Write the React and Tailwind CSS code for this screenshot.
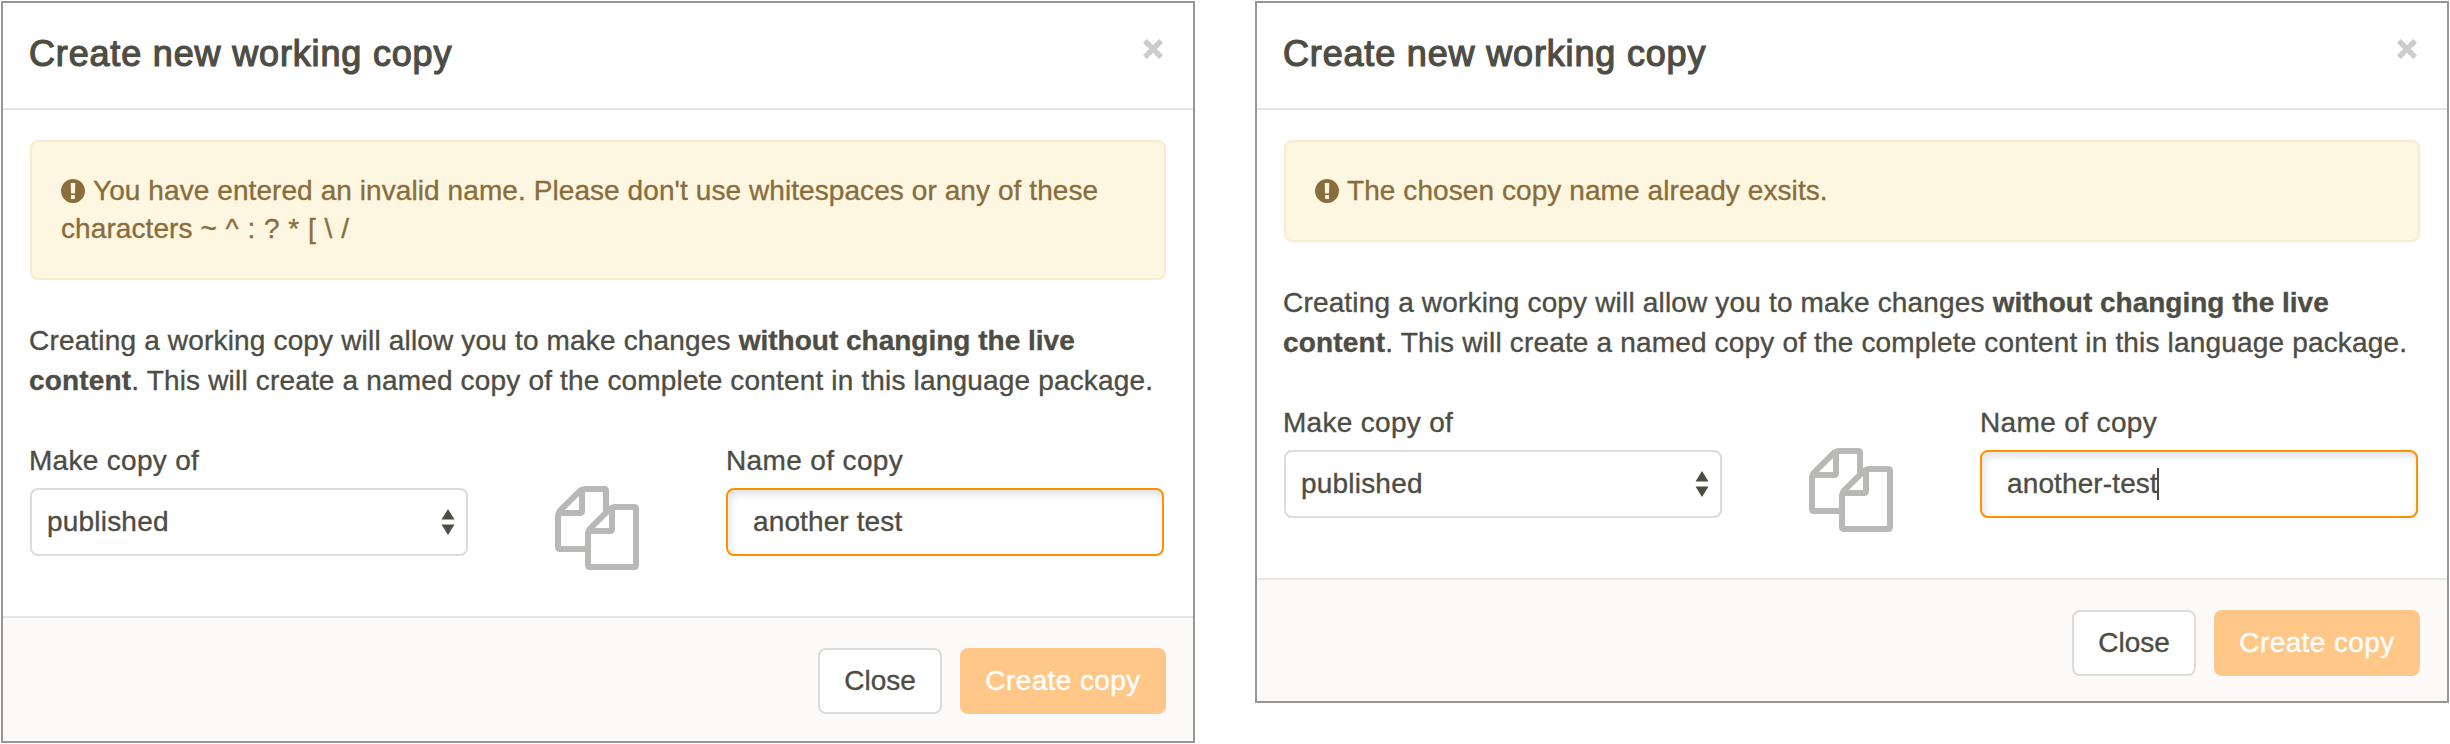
function CloseIcon() {
  return (
    <svg className="h-5 w-5" viewBox="0 0 20 20" fill="none" stroke="#cccccc" strokeWidth="5.4">
      <path d="M1.9 1.9 18.1 18.1M18.1 1.9 1.9 18.1" />
    </svg>
  );
}

function ExclamationCircle() {
  return (
    <svg className="mr-[8px] -mt-[3px] inline-block h-6 w-6 align-middle" viewBox="128 128 1536 1536" fill="currentColor">
      <path d="M896 128q209 0 385.5 103t279.5 279.5 103 385.5-103 385.5-279.5 279.5-385.5 103-385.5-103-279.5-279.5-103-385.5 103-385.5 279.5-279.5 385.5-103zm128 1247v-190q0-14-9-23.5t-22-9.5h-192q-13 0-23 10t-10 23v190q0 13 10 23t23 10h192q13 0 22-9.5t9-23.5zm-2-344l18-621q0-12-10-18-10-8-24-8h-220q-14 0-24 8-10 6-10 18l17 621q0 10 10 17.5t24 7.5h185q14 0 23.5-7.5t10.5-17.5z" />
    </svg>
  );
}

function CopyIcon() {
  return (
    <svg className="mt-[45px] ml-[87px] h-[84px] w-[84px] shrink-0" viewBox="0 0 1792 1792" fill="#b8b8b7">
      <path d="M1696 384q40 0 68 28t28 68v1216q0 40-28 68t-68 28h-960q-40 0-68-28t-28-68v-288h-544q-40 0-68-28t-28-68v-672q0-40 20-88t48-76l408-408q28-28 76-48t88-20h416q40 0 68 28t28 68v328q68-40 128-40h416zm-544 213l-299 299h299v-299zm-640-384l-299 299h299v-299zm196 647l316-316v-416h-384v416q0 40-28 68t-68 28h-416v640h512v-256q0-40 20-88t48-76zm956 804v-1152h-384v416q0 40-28 68t-68 28h-416v640h896z" />
    </svg>
  );
}

function SelectArrows() {
  return (
    <svg className="h-[26px] w-[14px]" viewBox="0 0 14 26" fill="#4d4d44">
      <path d="M7 0 13.5 10.5H.5zM7 26 .5 15.5h13z" />
    </svg>
  );
}

function Modal({ message, name, caret, footerHeight }) {
  return (
    <section className="w-[1194px] border-2 border-[#969897] bg-white">
      <header className="flex h-[107px] items-start justify-between border-b-2 border-[#e5e5e5] pr-[30px] pl-[26px]">
        <h2 className="mt-[26px] text-[36px] leading-[50px] tracking-[0.83px] [-webkit-text-stroke:1.2px_#4d4d44]">
          Create new working copy
        </h2>
        <button className="mt-9">
          <CloseIcon />
        </button>
      </header>
      <div className="px-[27px] pt-[30px]">
        <div className="rounded-lg border-2 border-[#faebcc] bg-[#fdf7e2] px-[29px] py-[30px] leading-[38px] tracking-[0.08px] text-[#8a6d3b]">
          <ExclamationCircle />
          {message}
        </div>
        <p className="mt-[41px] -ml-px leading-10 tracking-[0.17px] whitespace-nowrap">
          Creating a working copy will allow you to make changes <b className="tracking-normal">without changing the live</b>
          <br />
          <b>content</b>. This will create a named copy of the complete content in this language package.
        </p>
        <div className="mt-10 flex h-[175px] items-start">
          <label className="block w-[438px]">
            <span className="-ml-px block h-[47px] leading-10 tracking-[0.3px]">Make copy of</span>
            <span className="flex h-[68px] items-center justify-between rounded-lg border-2 border-[#dcdcdc] bg-white pr-[11px] pl-[15px]">
              <span className="tracking-[0.2px]">published</span>
              <SelectArrows />
            </span>
          </label>
          <CopyIcon />
          <label className="ml-[87px] block w-[438px]">
            <span className="block h-[47px] leading-10 tracking-[0.37px]">Name of copy</span>
            <span className="flex h-[68px] items-center rounded-lg border-2 border-[#ff9000] bg-white pl-[25px] shadow-[inset_2px_4px_8px_rgba(0,0,0,0.12)]">
              <span className="tracking-[0.12px]">{name}</span>
              {caret && <span className="-ml-px h-8 w-[2px] bg-[#4d4d44]" />}
            </span>
          </label>
        </div>
      </div>
      <footer className={`flex ${footerHeight} justify-end gap-[18px] border-t-2 border-[#e5e5e5] bg-[#fbfaf8] pt-[30px] pr-[27px]`}>
        <button className="h-[66px] w-[124px] rounded-lg border-2 border-[#dcdcdc] bg-white">Close</button>
        <button className="h-[66px] w-[206px] rounded-lg bg-[#ffc788] tracking-[0.4px] text-white">Create copy</button>
      </footer>
    </section>
  );
}

export default function App() {
  return (
    <main className="flex h-[744px] w-[2450px] items-start gap-[60px] bg-white p-px font-['Liberation_Sans',Arial,sans-serif] text-[28px] text-[#4d4d44] [-webkit-text-stroke:0.35px_currentColor]">
      <Modal
        message={
          <>
            You have entered an invalid name. Please don't use whitespaces or any of these
            <br />
            characters <span className="tracking-[0.5px]">~ ^ : ? * [ \ /</span>
          </>
        }
        name="another test"
        footerHeight="h-[125px]"
      />
      <Modal
        message="The chosen copy name already exsits."
        name="another-test"
        caret
        footerHeight="h-[123px]"
      />
    </main>
  );
}
